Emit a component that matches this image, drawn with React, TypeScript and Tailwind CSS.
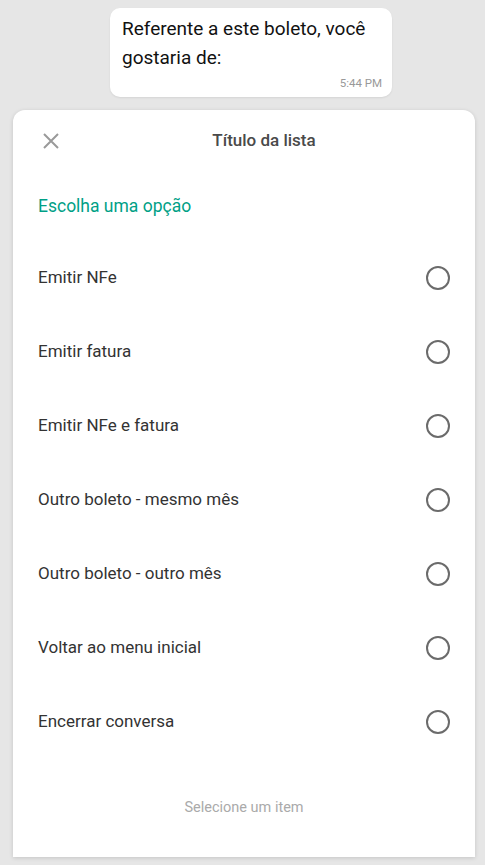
import React from "react";

const items = [
  "Emitir NFe",
  "Emitir fatura",
  "Emitir NFe e fatura",
  "Outro boleto - mesmo mês",
  "Outro boleto - outro mês",
  "Voltar ao menu inicial",
  "Encerrar conversa",
];

export default function App() {
  return (
    <div
      className="w-[485px] h-[865px] bg-[#e6e6e6] overflow-hidden flex flex-col"
      style={{ fontFamily: "Roboto, 'Liberation Sans', sans-serif" }}
    >
      <div className="mt-[8px] ml-[110px] w-[282px] h-[89px] bg-white rounded-[10px] shadow-[0_1px_2px_rgba(0,0,0,0.08)] pl-[12px] pr-[10px] pt-[6px] flex flex-col">
        <p className="text-[19px] leading-[29px] text-[#111]">
          Referente a este boleto, você gostaria de:
        </p>
        <span className="self-end text-[11.5px] leading-[13px] text-[#999] mt-[5px]">5:44 PM</span>
      </div>

      <div className="mt-[13px] ml-[13px] w-[462px] flex-1 mb-[8px] bg-white rounded-t-[12px] shadow-[0_1px_4px_rgba(0,0,0,0.15)] flex flex-col">
        <div className="relative h-[61px] flex items-center pl-[40px] justify-center">
          <svg
            className="absolute left-[29px] top-[22px]"
            width="18"
            height="18"
            viewBox="0 0 18 18"
          >
            <path d="M2 2 L16 16 M16 2 L2 16" stroke="#9a9a9a" strokeWidth="2" />
          </svg>
          <span className="text-[17px] font-medium text-[#4a4a4a]">Título da lista</span>
        </div>
        <div className="h-[70px] pl-[25px] flex items-center">
          <span className="text-[17.5px] text-[#00a086]">Escolha uma opção</span>
        </div>
        <div className="flex flex-col">
          {items.map((t) => (
            <div key={t} className="h-[74px] pl-[25px] pr-[25px] flex items-center justify-between">
              <span className="text-[17px] text-[#333]">{t}</span>
              <span className="w-[24px] h-[24px] rounded-full border-2 border-[#6b6b6b]" />
            </div>
          ))}
        </div>
        <div className="flex-1 flex items-center justify-center">
          <span className="text-[14.5px] text-[#aaa]">Selecione um item</span>
        </div>
      </div>
    </div>
  );
}
